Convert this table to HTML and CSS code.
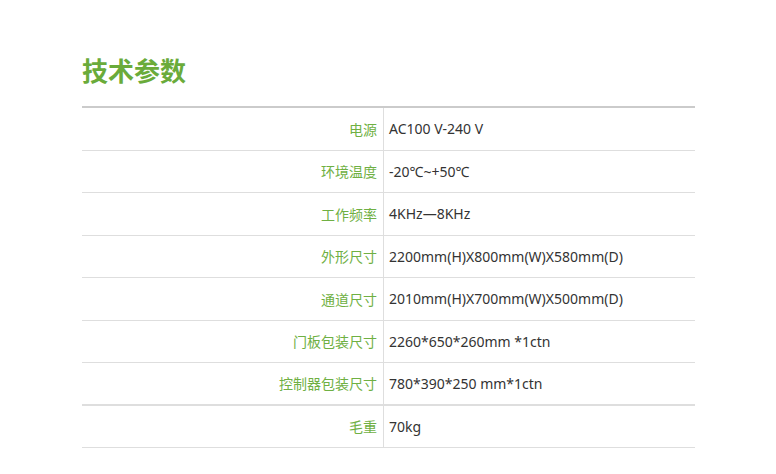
FILE: index.html
```html
<!DOCTYPE html>
<html lang="zh">
<head>
<meta charset="utf-8">
<link rel="stylesheet" href="styles.css">
</head>
<body>
<div class="page">
  <h2 class="title">技术参数</h2>
  <div class="spec">
    <div class="row"><div class="k">电源</div><div class="v">AC100 V-240 V</div></div>
    <div class="row"><div class="k">环境温度</div><div class="v">-20℃~+50℃</div></div>
    <div class="row"><div class="k">工作频率</div><div class="v">4KHz—8KHz</div></div>
    <div class="row"><div class="k">外形尺寸</div><div class="v">2200mm(H)X800mm(W)X580mm(D)</div></div>
    <div class="row"><div class="k">通道尺寸</div><div class="v">2010mm(H)X700mm(W)X500mm(D)</div></div>
    <div class="row"><div class="k">门板包装尺寸</div><div class="v">2260*650*260mm *1ctn</div></div>
    <div class="row thick"><div class="k">控制器包装尺寸</div><div class="v">780*390*250 mm*1ctn</div></div>
    <div class="row"><div class="k">毛重</div><div class="v">70kg</div></div>
  </div>
</div>
</body>
</html>
```
FILE: styles.css
```css
html, body {
  margin: 0;
  padding: 0;
  background: #fff;
}
.page {
  padding: 51px 0 0 82px;
  width: 613px;
  font-family: "Noto Sans", "Noto Sans CJK SC", sans-serif;
}
.title {
  margin: 0 0 17px 0;
  font-family: "Noto Sans CJK SC", sans-serif;
  font-size: 26px;
  line-height: 38px;
  font-weight: 700;
  color: #6aab3a;
}
.spec {
  border-top: 2px solid #cbcbcb;
}
.row {
  display: flex;
  height: 42.5px;
  box-sizing: border-box;
  border-bottom: 1px solid #dedede;
}
.row.thick {
  border-bottom: 2px solid #dedede;
}
.k {
  width: 302px;
  box-sizing: border-box;
  border-right: 1px solid #dedede;
  padding-right: 6px;
  font-family: "Noto Sans CJK SC", sans-serif;
  font-size: 14px;
  color: #6fb043;
  display: flex;
  align-items: center;
  justify-content: flex-end;
}
.v {
  padding-left: 5px;
  font-size: 14px;
  color: #333;
  display: flex;
  align-items: center;
}
```
